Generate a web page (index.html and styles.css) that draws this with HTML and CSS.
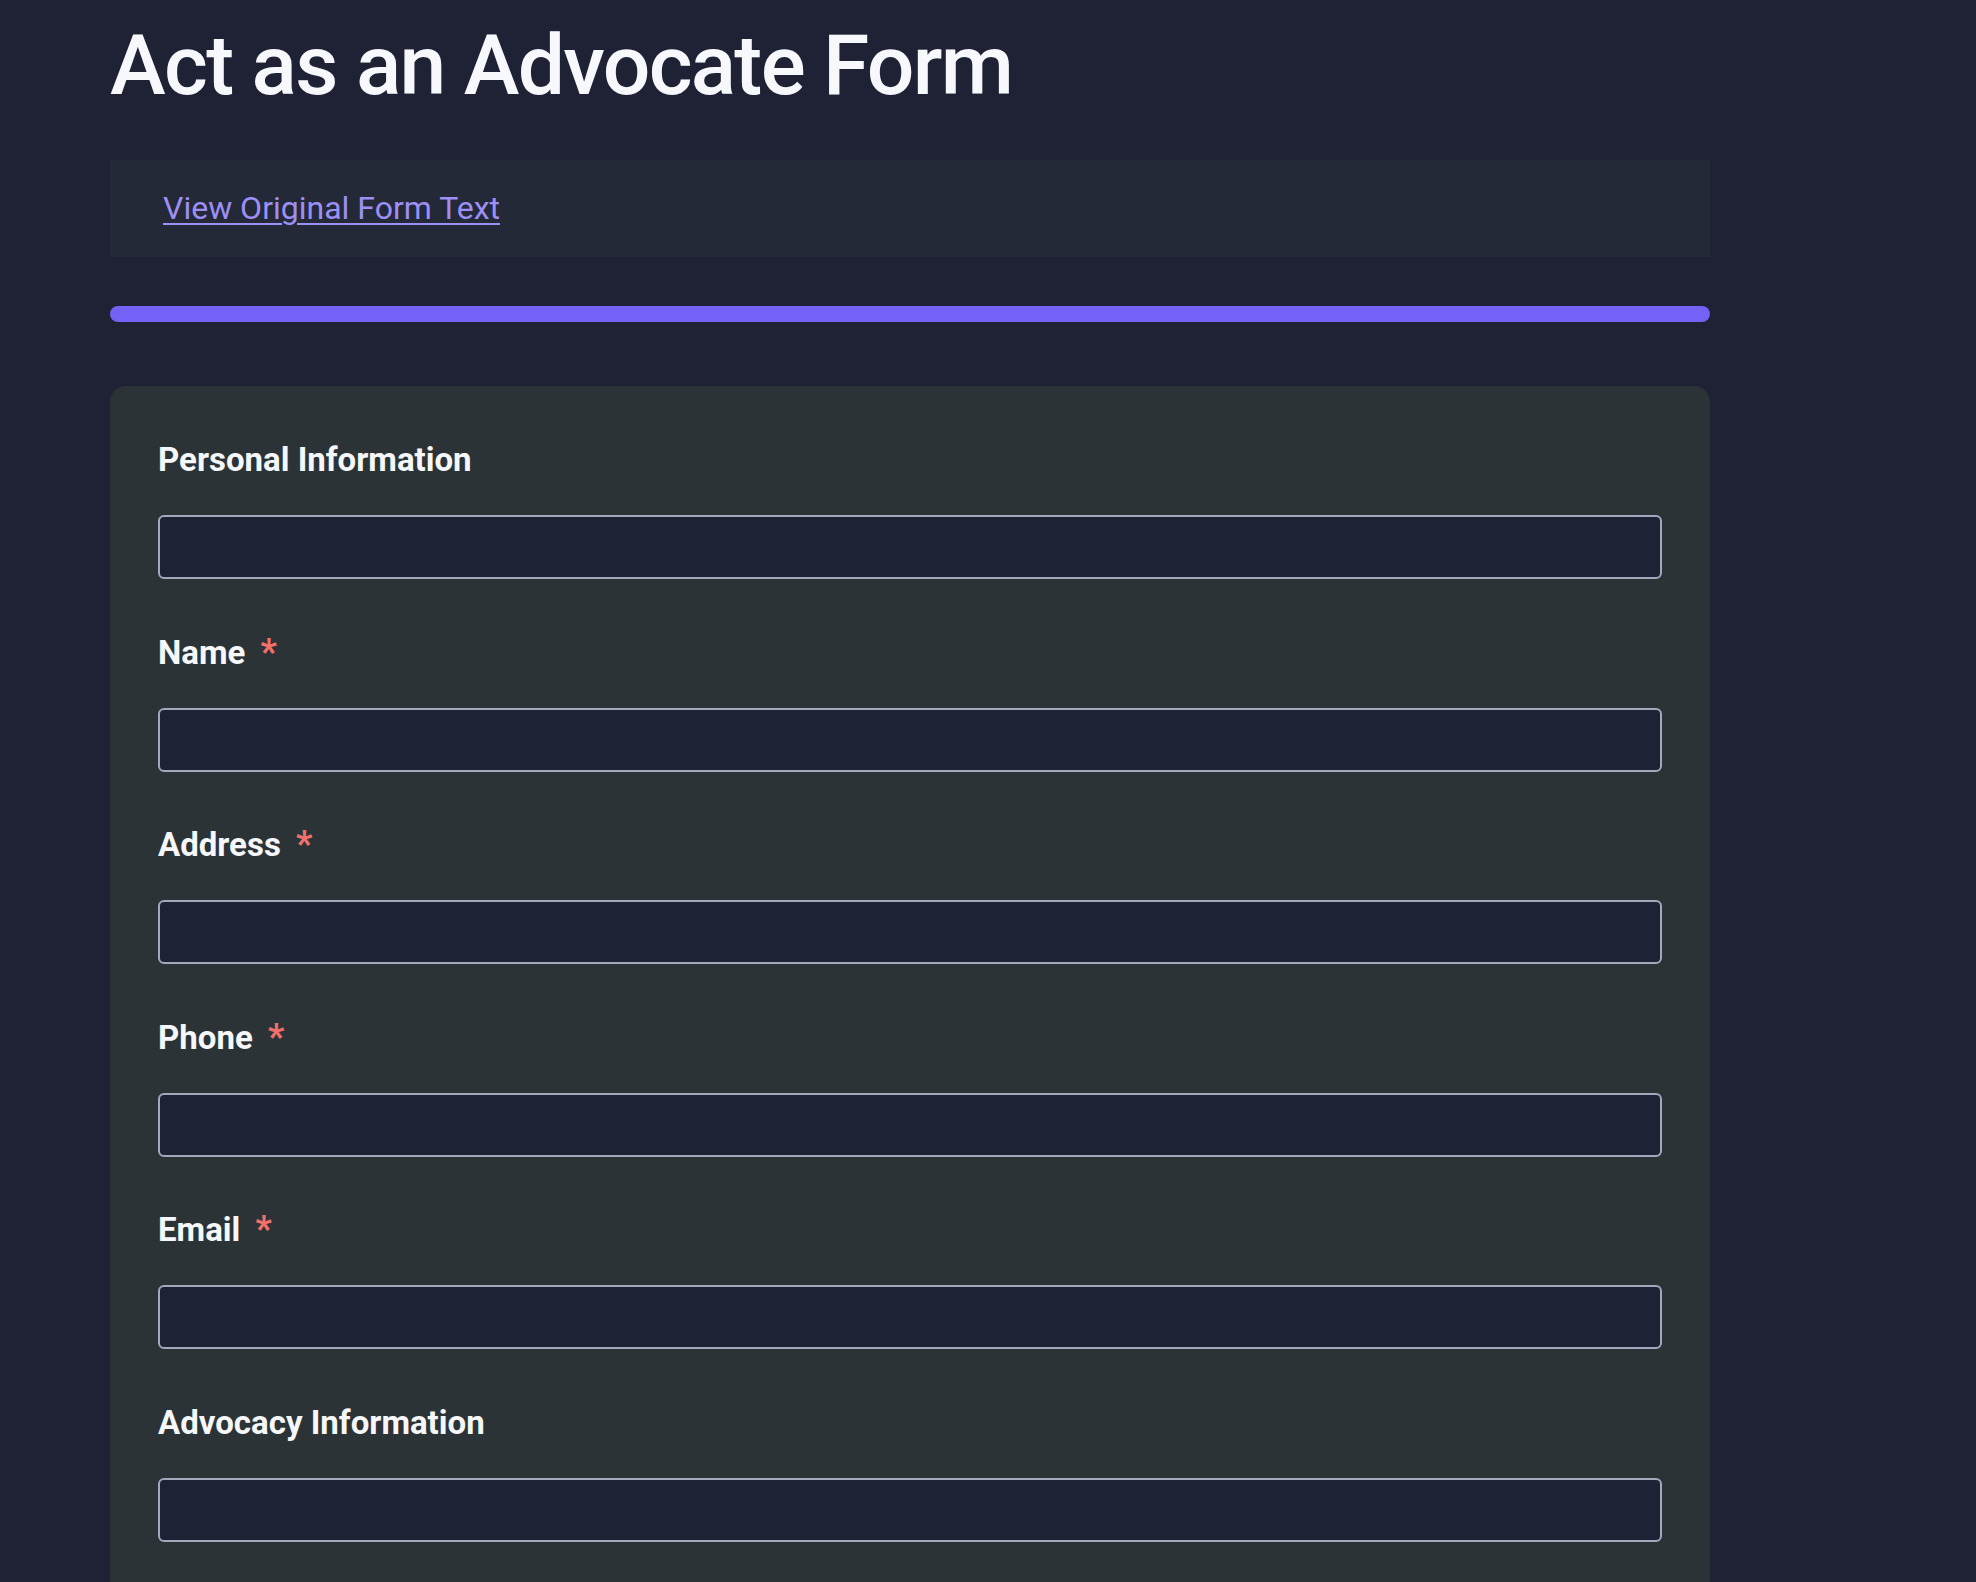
FILE: index.html
```html
<!DOCTYPE html>
<html lang="en">
<head>
<meta charset="utf-8">
<title>Act as an Advocate Form</title>
<link rel="stylesheet" href="styles.css">
</head>
<body>
<main class="page">
  <h1 class="title">Act as an Advocate Form</h1>
  <div class="original">
    <a class="original-link" href="#">View Original Form Text</a>
  </div>
  <div class="progress"></div>
  <form class="card">
    <div class="field">
      <label class="label">Personal Information</label>
      <input class="input" type="text">
    </div>
    <div class="field">
      <label class="label">Name <span class="req">*</span></label>
      <input class="input" type="text">
    </div>
    <div class="field">
      <label class="label">Address <span class="req">*</span></label>
      <input class="input" type="text">
    </div>
    <div class="field">
      <label class="label">Phone <span class="req">*</span></label>
      <input class="input" type="text">
    </div>
    <div class="field">
      <label class="label">Email <span class="req">*</span></label>
      <input class="input" type="text">
    </div>
    <div class="field">
      <label class="label">Advocacy Information</label>
      <input class="input" type="text">
    </div>
  </form>
</main>
</body>
</html>
```

FILE: styles.css
```css
html, body {
  margin: 0;
  padding: 0;
  background: #1e2234;
}

body {
  font-family: Roboto, "Noto Sans", "Liberation Sans", sans-serif;
  color: #f5f7fa;
}

.page {
  width: 1600px;
  margin-left: 110px;
  display: flex;
  flex-direction: column;
}

.title {
  margin: 0;
  padding-top: 24px;
  font-size: 84px;
  line-height: 84px;
  font-weight: 500;
  letter-spacing: -1.7px;
  color: #f6f8fb;
}

.original {
  margin-top: 52px;
  background: #242938;
  padding: 26px 53px;
  height: 97px;
  box-sizing: border-box;
}

.original-link {
  font-size: 32px;
  line-height: 45px;
  color: #9d8ff5;
  text-decoration: underline;
  text-underline-offset: 4px;
  text-decoration-thickness: 2px;
}

.progress {
  margin-top: 49px;
  height: 16px;
  border-radius: 8px;
  background: #7461f5;
}

.card {
  margin-top: 64px;
  background: #2c3336;
  border-radius: 16px 16px 0 0;
  padding: 50px 48px 41px;
  display: flex;
  flex-direction: column;
  gap: 49.6px;
}

.field {
  display: flex;
  flex-direction: column;
}

.label {
  height: 48px;
  font-size: 33px;
  line-height: 48px;
  font-weight: 700;
  color: #f5f7fa;
  margin-bottom: 31px;
}

.req {
  color: #f2706a;
  margin-left: 7px;
  font-size: 36px;
  line-height: 0;
}

.input {
  box-sizing: border-box;
  width: 100%;
  height: 64px;
  margin: 0;
  background: #1d2234;
  border: 2px solid #a4a8bd;
  border-radius: 6px;
  font-family: inherit;
  font-size: 28px;
  color: #f5f7fa;
  padding: 0 16px;
}
```
